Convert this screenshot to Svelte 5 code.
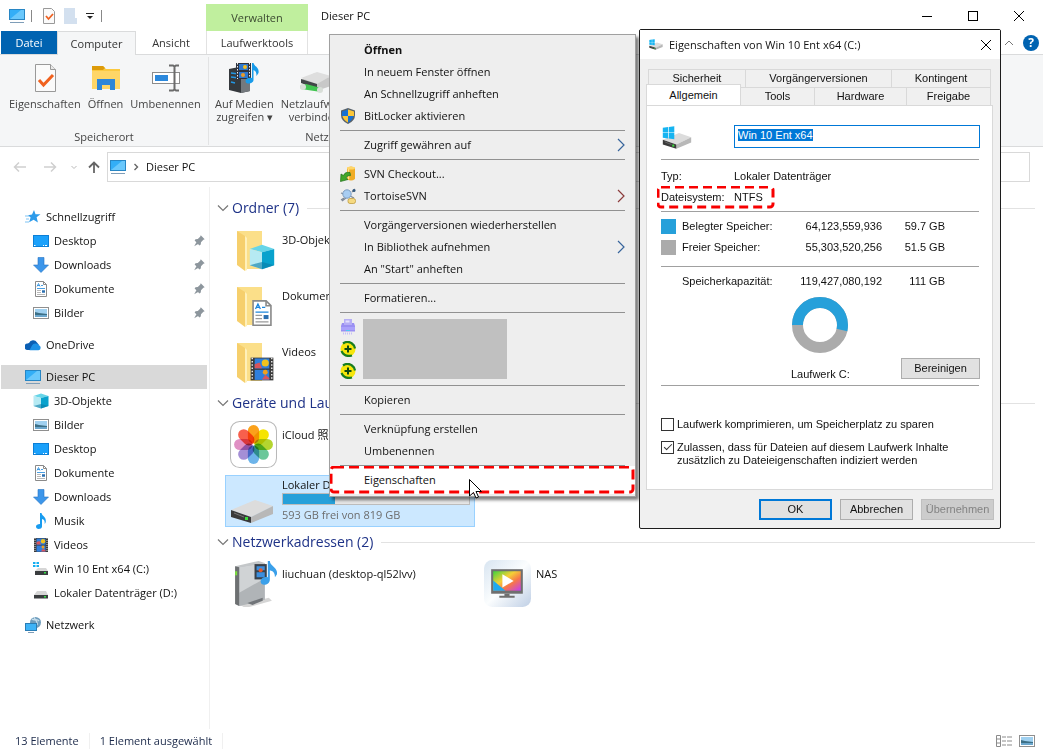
<svelte:options runes={true} />

<script lang="ts">
  import { onMount } from "svelte";

  type NavItem = { label: string; icon: string; pinned?: boolean };
  type NavGroup = { root: NavItem; selected?: boolean; children: NavItem[] };
  type MenuItem = { label: string; icon?: string; strong?: boolean; submenu?: boolean };

  const navGroups: NavGroup[] = [
    {
      root: { label: "Schnellzugriff", icon: "star" },
      children: [
        { label: "Desktop", icon: "desktop", pinned: true },
        { label: "Downloads", icon: "download", pinned: true },
        { label: "Dokumente", icon: "document", pinned: true },
        { label: "Bilder", icon: "picture", pinned: true }
      ]
    },
    { root: { label: "OneDrive", icon: "cloud" }, children: [] },
    {
      root: { label: "Dieser PC", icon: "pc" },
      selected: true,
      children: [
        { label: "3D-Objekte", icon: "cube" },
        { label: "Bilder", icon: "picture" },
        { label: "Desktop", icon: "desktop" },
        { label: "Dokumente", icon: "document" },
        { label: "Downloads", icon: "download" },
        { label: "Musik", icon: "note" },
        { label: "Videos", icon: "film" },
        { label: "Win 10 Ent x64 (C:)", icon: "windrive" },
        { label: "Lokaler Datenträger (D:)", icon: "drive" }
      ]
    },
    { root: { label: "Netzwerk", icon: "network" }, children: [] }
  ];

  const folders: NavItem[] = [
    { label: "3D-Objekte", icon: "cube" },
    { label: "Dokumente", icon: "document" },
    { label: "Videos", icon: "film" }
  ];

  const menuTop: MenuItem[][] = [
    [
      { label: "Öffnen", strong: true },
      { label: "In neuem Fenster öffnen" },
      { label: "An Schnellzugriff anheften" },
      { label: "BitLocker aktivieren", icon: "shield" }
    ],
    [{ label: "Zugriff gewähren auf", submenu: true }],
    [
      { label: "SVN Checkout...", icon: "svn" },
      { label: "TortoiseSVN", icon: "tortoise", submenu: true }
    ],
    [
      { label: "Vorgängerversionen wiederherstellen" },
      { label: "In Bibliothek aufnehmen", submenu: true },
      { label: 'An "Start" anheften' }
    ],
    [{ label: "Formatieren..." }]
  ];

  const menuBottom: MenuItem[][] = [
    [{ label: "Kopieren" }],
    [{ label: "Verknüpfung erstellen" }, { label: "Umbenennen" }]
  ];

  const petals = [
    { angle: 0, color: "#fba11b" },
    { angle: 45, color: "#f5e400" },
    { angle: 90, color: "#b4d52f" },
    { angle: 135, color: "#6cc79a" },
    { angle: 180, color: "#6db4ea" },
    { angle: 225, color: "#a48fd6" },
    { angle: 270, color: "#e090c4" },
    { angle: 315, color: "#f8604c" }
  ];

  const drivePercent = 28;

  let volumeName = $state("Win 10 Ent x64");
  let compress = $state(false);
  let indexed = $state(true);
  let nameInput: HTMLInputElement;

  onMount(() => {
    nameInput.focus();
    nameInput.select();
  });
</script>

{#snippet icon(name: string)}
  <svg class="icon" viewBox="0 0 16 16" aria-hidden="true">
    {#if name === "star"}
      <path d="M9 1l1.500 4.200 5 .1-3.900 3 1.300 5.200-4.300-2.800-4.500 2.500 1.500-4.700-2.600-2.300 4-.6z" fill="#2d9bea" />
      <path d="M0 7h4M1 10h3M0 13h4" stroke="#7fc3f3" />
    {:else if name === "desktop"}
      <rect y="2" width="16" height="12" fill="#0c7fd6" />
      <rect x="1" y="3" width="14" height="10" fill="#1ba1fb" />
      <path d="M1 12.500h1.500M10 12.500h1M12 12.500h2" stroke="#fff" />
    {:else if name === "download"}
      <path d="M5 .5h6V8h4.500L8 15.500.5 8H5z" fill="#3c96ea" stroke="#2574c2" stroke-width=".6" />
    {:else if name === "document"}
      <path d="M2.500.5h8l3 3v12h-11z" fill="#fff" stroke="#8a8a8a" />
      <path d="M10.500.5v3h3" fill="none" stroke="#8a8a8a" />
      <path d="M4 5.500L5.500 2.500 7 5.500M4.500 4.500h2M8 4.500h2M4 7.500h8" fill="none" stroke="#1c86dc" stroke-width=".8" />
      <path d="M4 9.500h4M4 11.500h4M4 13.500h8" stroke="#9a9a9a" stroke-width=".7" />
      <path d="M9 10.500h3" stroke="#2b6fb0" stroke-width="2.500" />
    {:else if name === "picture"}
      <rect x=".5" y="2.500" width="15" height="11" fill="#fff" stroke="#8f8f8f" />
      <rect x="2" y="4" width="12" height="8" fill="#9fd0f0" />
      <path d="M2 7l4 1 8 1v3H2z" fill="#3c6f86" />
      <path d="M2 10h12v2H2z" fill="#6ba6cc" />
    {:else if name === "cloud"}
      <path d="M4 6a4.500 4.500 0 0 1 8-.5L14 8l-8 5H3a3.200 3.200 0 0 1-.5-6.500z" fill="#0a5fb4" />
      <path d="M4.500 13.200L7 8.500a4 4 0 0 1 6.500-.5 2.700 2.700 0 0 1 0 5.300z" fill="#1c91e6" />
    {:else if name === "pc"}
      <rect x=".5" y="1.500" width="15" height="10" fill="#33aef7" stroke="#2886c4" />
      <path d="M1 11L12 2h3v9z" fill="#6ac8fc" />
      <path d="M1 14.500h14" stroke="#7e9db8" />
    {:else if name === "cube"}
      <path d="M8 .5L15.500 3 8 5 .5 3z" fill="#66d5e8" />
      <path d="M.5 3L8 5v10.500L.5 13z" fill="#b6eaf3" />
      <path d="M15.500 3L8 5v10.500l7.500-2.500z" fill="#08a2cd" />
      <path d="M8 11l7.500 2L8 15.500.5 13z" fill="#087ba6" opacity=".6" />
    {:else if name === "note"}
      <path d="M7 0h1.500c.4 3 4.800 3.500 4.300 8.500-.2 1.500-.8 2-1.200 2.500.6-3-.6-4.500-2.600-5v7.500c-.2 1.800-1.600 2.500-3.300 2.500S3 15 3 13.500 4.500 11 7 11z" fill="#189cf0" />
    {:else if name === "film"}
      <rect x="1" y="1" width="14" height="14" fill="#3a3a3a" />
      <path d="M2 1v14M14 1v14" stroke="#e6e6e6" stroke-width=".9" stroke-dasharray="1 1" />
      <rect x="3.500" y="1.500" width="9" height="6.200" fill="#2f7fdd" />
      <rect x="3.500" y="8.500" width="9" height="6.200" fill="#2f7fdd" />
      <path d="M3.500 5l3-1 1.500 3.500H3.500zM8 14.500l2-3 2.500 2v1z" fill="#d8545c" />
      <circle cx="10" cy="4.300" r="2.200" fill="#f2c21c" />
      <circle cx="10" cy="10" r="1.500" fill="#f2a01c" />
    {:else if name === "windrive"}
      <path d="M0 1h2.500v2H0zM3.500 1H6v2H3.500zM0 4h2.500v2H0zM3.500 4H6v2H3.500z" fill="#15aef0" />
      <path d="M5 7h8l2 3H2z" fill="#d6d6d6" />
      <rect x="2" y="10" width="13" height="4" fill="#3a3d3f" />
      <rect x="11" y="11" width="2" height="1.500" fill="#35dd47" />
    {:else if name === "drive"}
      <path d="M4 6h9l2 4H1z" fill="#d6d6d6" />
      <rect x="1" y="10" width="14" height="3.500" fill="#3a3d3f" />
      <rect x="11" y="11" width="2" height="1.500" fill="#35dd47" />
    {:else if name === "network"}
      <circle cx="10.500" cy="5.500" r="5.500" fill="#6f9dbd" />
      <path d="M7 2c2 2 5-1 7 2M9 0c1 4 4 3 3 8" fill="none" stroke="#c4dcea" stroke-width="1.400" />
      <rect x=".5" y="6.500" width="11" height="7" fill="#3eb3f7" stroke="#2a7db5" />
      <path d="M3 15.500h6" stroke="#7e9db8" />
    {:else if name === "pin"}
      <path d="M10 1.500l4.500 4.500-1.500.7-2.700 2.700-.3 2.600-1.500 1L3 7.500l1-1.500 2.600-.3 2.700-2.700zM5 9.500l2 2L2.500 14z" fill="#8d969d" />
    {:else if name === "shield"}
      <path d="M8 0l7 2.500v4.500q0 6-7 9Q1 13 1 7V2.500z" fill="#58626b" />
      <path d="M8 1.500V8H2V3.500zM8 8h5.500q-1 4-5.500 6.500z" fill="#1670d2" />
      <path d="M8 1.500V8h6V3.500zM8 8H2.500q1 4 5.500 6.500z" fill="#fbc638" />
    {:else if name === "svn"}
      <path d="M7 2q4-3 8 0v11q-4 3-8 0z" fill="#f0ac26" />
      <path d="M8.500 2v11" stroke="#ffe391" stroke-width="1.500" />
      <ellipse cx="11" cy="2" rx="4" ry="1.500" fill="#ffd669" />
      <path d="M10 6.500Q5 5.500 3.500 9.500L1 8l-.5 7.500L8 13.500l-2-1.500q1-3 4.500-2.500z" fill="#41a62a" stroke="#1f701a" stroke-width=".7" />
    {:else if name === "tortoise"}
      <path d="M1 5l3 1M1 12l3-2M12 4l3-3M10 8l4 2M2 13l4-3" stroke="#7e8894" stroke-width="1.200" />
      <circle cx="7" cy="6" r="4.200" fill="#a8cdf2" stroke="#7d9cc0" />
      <circle cx="14" cy="2.500" r="1.500" fill="#31577c" />
      <rect x="8" y="10.500" width="7.500" height="5" rx="2" fill="#f5d980" stroke="#b99432" stroke-width=".7" />
    {:else if name === "printer"}
      <rect x="4" y="0" width="8" height="6" fill="#b6aef5" />
      <rect x="5.500" y="1.500" width="4" height="2" fill="#e4e0ff" />
      <path d="M2 4h2v2h8V4h2l1 3v5.500H1V7z" fill="#9a8ff2" />
      <path d="M1 8h14v3H1z" fill="#aaa1fb" />
      <path d="M6 11.500h4" stroke="#4cc6f5" />
      <path d="M3 14.500h10" stroke="#c6bff8" stroke-width="2" stroke-dasharray="1 1" />
    {:else if name === "plus"}
      <circle cx="8" cy="8" r="7.500" fill="#f6e60c" />
      <path d="M3 2.500Q9-1.500 14 4.500l1 3M1.500 10q3 6.500 10.500 4.500" fill="none" stroke="#187d20" stroke-width="2.200" />
      <path d="M8 4.500v7M4.500 8h7" stroke="#0d4a10" stroke-width="2" />
    {/if}
  </svg>
{/snippet}

{#snippet bigDrive(windows: boolean)}
  <svg class="big-drive" viewBox="0 0 44 34" aria-hidden="true">
    <path d="M1 19L25 9l18 6-22 11z" fill="#dcdcdc" />
    <path d="M21 26l22-11v8L21 32z" fill="#b8b8b8" />
    <path d="M1 19l20 7v6L1 26z" fill="#3a3a3a" />
    <path d="M4 22l10 4" stroke="#777" />
    <rect x="15" y="26" width="3" height="3" fill="#3ddd3c" />
    {#if windows}
      <path d="M1 1l8-1v8H1zM10 0l8-1v9h-8zM1 9h8v8l-8-1zM10 9h8v9l-8-1z" fill="#16b4f1" />
    {/if}
  </svg>
{/snippet}

{#snippet menuRow(item: MenuItem)}
  <button class="menu-item" class:strong={item.strong} role="menuitem">
    <span class="menu-icon">
      {#if item.icon}{@render icon(item.icon)}{/if}
    </span>
    <span class="menu-label">{item.label}</span>
    {#if item.submenu}
      <svg class="submenu-arrow" viewBox="0 0 8 14" aria-hidden="true">
        <path d="M1 1l6 6-6 6" fill="none" stroke={item.icon ? "#8c3c3c" : "#38659c"} stroke-width="1.200" />
      </svg>
    {/if}
  </button>
{/snippet}

{#snippet sectionHead(title: string)}
  <h2 class="section-head">
    <svg viewBox="0 0 12 8" aria-hidden="true"><path d="M1 1.500l5 5 5-5" fill="none" stroke="#777" stroke-width="1.200" /></svg>
    <span>{title}</span>
  </h2>
{/snippet}

<div class="explorer">
  <header class="titlebar">
    <div class="quick-access">
      {@render icon("pc")}
      <i class="divider"></i>
      <svg class="icon check-doc" viewBox="0 0 16 16" aria-hidden="true">
        <path d="M2.500.5h8l3 3v12h-11z" fill="#fafafa" stroke="#999" />
        <path d="M5 8l2.500 3L12 6" fill="none" stroke="#ee6020" stroke-width="1.800" />
      </svg>
      <svg class="icon" viewBox="0 0 16 16" aria-hidden="true">
        <path d="M1 0h11v10h2v6H1z" fill="#d3e0ef" />
      </svg>
      <svg class="caret" viewBox="0 0 10 8" aria-hidden="true"><path d="M1 1.500h8" stroke="#222" /><path d="M2 4h6L5 7z" fill="#222" /></svg>
      <i class="divider"></i>
    </div>
    <span class="context-tab">Verwalten</span>
    <span class="window-title">Dieser PC</span>
    <div class="window-controls">
      <button aria-label="Minimieren"><svg viewBox="0 0 10 10"><path d="M0 5.500h10" stroke="#000" /></svg></button>
      <button aria-label="Maximieren"><svg viewBox="0 0 10 10"><rect x=".5" y=".5" width="9" height="9" fill="none" stroke="#000" /></svg></button>
      <button aria-label="Schließen"><svg viewBox="0 0 10 10"><path d="M0 0l10 10M10 0L0 10" stroke="#000" /></svg></button>
    </div>
  </header>

  <nav class="tabs">
    <button class="tab file">Datei</button>
    <button class="tab current">Computer</button>
    <button class="tab">Ansicht</button>
    <button class="tab tools">Laufwerktools</button>
    <div class="tab-end">
      <svg class="collapse" viewBox="0 0 10 6" aria-hidden="true"><path d="M1 5l4-4 4 4" fill="none" stroke="#777" /></svg>
      <button class="help" aria-label="Hilfe">?</button>
    </div>
  </nav>

  <section class="ribbon">
    <div class="ribbon-group">
      <div class="ribbon-buttons">
        <button>
          <svg viewBox="0 0 32 32" aria-hidden="true">
            <path d="M6.500 2.500h15l5 5v22h-20z" fill="#fafafa" stroke="#999" />
            <path d="M21.500 2.500v5h5" fill="#e8e8e8" stroke="#999" />
            <path d="M10 18l4.500 5L24 13" fill="none" stroke="#f0611e" stroke-width="3" />
          </svg>
          <span>Eigenschaften</span>
        </button>
        <button>
          <svg viewBox="0 0 32 32" aria-hidden="true">
            <path d="M2 4h11l3 3h14v20H2z" fill="#fbc93f" />
            <path d="M2 4h11l2 2-2 2H2z" fill="#dd9b0a" />
            <path d="M2 9h28v18H2z" fill="#fed667" />
            <path d="M7 28V17h18v11h-5v-5h-8v5z" fill="#2d86d8" />
          </svg>
          <span>Öffnen</span>
        </button>
        <button>
          <svg viewBox="0 0 32 32" aria-hidden="true">
            <rect x="2.500" y="10.500" width="27" height="11" fill="#fff" stroke="#8c8c8c" />
            <rect x="5" y="13" width="13" height="6" fill="#2b88dc" />
            <path d="M19 3.500h4l1.500 1 1.500-1h3M24.500 4v24M19 28.500h4l1.500-1 1.500 1h3" fill="none" stroke="#6b6b6b" stroke-width="2" />
          </svg>
          <span>Umbenennen</span>
        </button>
      </div>
      <span class="ribbon-caption">Speicherort</span>
    </div>
    <div class="ribbon-group wide">
      <div class="ribbon-buttons">
        <button>
          <svg viewBox="0 0 32 32" aria-hidden="true">
            <path d="M1 7l10-2 11 2v22l-9 2-12-3z" fill="#35393d" />
            <path d="M13 9l9-2v22l-9 2z" fill="#74797e" />
            <path d="M3 11l8 1M3 15l8 1M3 20l4 1" stroke="#2397e4" stroke-width="1.500" />
            <rect x="8" y="1" width="15" height="16" fill="#2d3340" />
            <path d="M9.500 1v16M21.500 1v16" stroke="#eee" stroke-dasharray="1.500 1.500" />
            <path d="M11 2h9v6h-9zM11 10h9v6h-9z" fill="#2d78cf" />
            <circle cx="17" cy="5" r="2" fill="#f4bd20" />
            <circle cx="15" cy="13" r="2" fill="#eb9a26" />
            <path d="M24 1h1.500c1 4 6 4 5 10l-2 3c0-4-1-5-3-6v10c0 4-8 5-8 1 0-3 4-4 6.500-3z" fill="#199bea" />
          </svg>
          <span>Auf Medien<br />zugreifen <b class="drop">▾</b></span>
        </button>
        <button>
          <svg viewBox="0 0 32 32" aria-hidden="true">
            <path d="M2 18l14-7 16 5v8l-12 4z" fill="#c8c8c8" />
            <path d="M2 16l16-6 14 4-14 8z" fill="#dedede" />
            <path d="M2 17l16 5v5L2 21z" fill="#424648" />
            <path d="M1 24l6-2 15 4v4L2 27z" fill="#42c552" />
            <circle cx="4" cy="25" r="3" fill="#d8ded8" />
            <circle cx="21" cy="28" r="3" fill="#d8ded8" />
          </svg>
          <span>Netzlaufwerk<br />verbinden</span>
        </button>
      </div>
      <span class="ribbon-caption">Netzwerk</span>
    </div>
  </section>

  <div class="address-row">
    <div class="nav-arrows">
      <button aria-label="Zurück"><svg viewBox="0 0 14 12"><path d="M13 6H1.500M6 1.500L1.500 6 6 10.500" fill="none" stroke="#cfcfcf" stroke-width="1.500" /></svg></button>
      <button aria-label="Vorwärts"><svg viewBox="0 0 14 12"><path d="M1 6h11.500M8 1.500L12.500 6 8 10.500" fill="none" stroke="#cfcfcf" stroke-width="1.500" /></svg></button>
      <button class="small" aria-label="Verlauf"><svg viewBox="0 0 8 12"><path d="M1.500 5L4 7.500 6.500 5" fill="none" stroke="#bbb" /></svg></button>
      <button aria-label="Nach oben"><svg viewBox="0 0 14 12"><path d="M7 12V1.500M2 6.500l5-5 5 5" fill="none" stroke="#666" stroke-width="1.800" /></svg></button>
    </div>
    <div class="address-box">
      {@render icon("pc")}
      <svg class="crumb" viewBox="0 0 6 8" aria-hidden="true"><path d="M1.500 1l3 3-3 3" fill="none" stroke="#666" stroke-width="1.400" /></svg>
      <span>Dieser PC</span>
    </div>
    <input class="search-box" type="search" aria-label="Suchen" />
  </div>

  <div class="body">
    <aside class="sidebar">
      {#each navGroups as group (group.root.label)}
        <ul class="nav-group">
          <li class="nav-row root" class:selected={group.selected}>
            {@render icon(group.root.icon)}
            <span>{group.root.label}</span>
          </li>
          {#each group.children as item (item.label)}
            <li class="nav-row">
              {@render icon(item.icon)}
              <span>{item.label}</span>
              {#if item.pinned}
                <span class="pin">{@render icon("pin")}</span>
              {/if}
            </li>
          {/each}
        </ul>
      {/each}
    </aside>

    <main class="content">
      {@render sectionHead("Ordner (7)")}
      <div class="tiles single">
        {#each folders as folder (folder.label)}
          <div class="tile">
            <div class="tile-icon folder">
              <svg class="folder-shape" viewBox="0 0 40 44" aria-hidden="true">
                <path d="M2 1h25v38H10z" fill="#fbdf89" />
                <path d="M2 1l8 5v35l-8-6z" fill="#f6cf6c" />
                <path d="M10 6v35l2-1V8z" fill="#fff0b9" />
              </svg>
              <span class="overlay">{@render icon(folder.icon)}</span>
            </div>
            <span class="tile-name">{folder.label}</span>
          </div>
        {/each}
      </div>

      {@render sectionHead("Geräte und Laufw")}
      <div class="tiles single">
        <div class="tile">
          <div class="tile-icon">
            <svg class="full" viewBox="0 0 46 46" aria-hidden="true">
              <rect x=".5" y=".5" width="45" height="45" rx="9" fill="#fff" stroke="#b9b9b9" />
              {#each petals as petal (petal.angle)}
                <rect class="petal" x="17.500" y="4" width="11" height="18" rx="5.500" fill={petal.color} transform="rotate({petal.angle} 23 23)" />
              {/each}
            </svg>
          </div>
          <span class="tile-name">iCloud 照片</span>
        </div>
        <div class="tile selected">
          <div class="tile-icon low">{@render bigDrive(false)}</div>
          <div class="tile-info">
            <span class="tile-name">Lokaler Daten</span>
            <div class="meter"><div style="width: {drivePercent}%"></div></div>
            <span class="tile-note">593 GB frei von 819 GB</span>
          </div>
        </div>
      </div>

      {@render sectionHead("Netzwerkadressen (2)")}
      <div class="tiles">
        <div class="tile">
          <div class="tile-icon">
            <svg class="full" viewBox="0 0 46 46" aria-hidden="true">
              <path d="M10 44l28-7 3 3-26 7z" fill="#d5d5d5" />
              <path d="M5 6L28 1l6 2v36L9 45l-4-2z" fill="#c4c7c9" />
              <path d="M9 7l25-4v36L9 45z" fill="#b0b4b7" />
              <path d="M9 7l25-4v15L9 32z" fill="#d0d3d5" />
              <path d="M5 6l4 1v38l-4-2z" fill="#6d7072" />
              <path d="M6 11v4" stroke="#7be03d" stroke-width="2" />
              <path d="M17 42l15-5v3l-10 4z" fill="#717579" />
              <rect x="24" y="4" width="12" height="15" fill="#39404a" />
              <path d="M26 6h8v4h-8zM26 12h8v5h-8z" fill="#3c8ede" />
              <circle cx="30" cy="10" r="2" fill="#e65a2a" />
              <path d="M37 1h2c0 5 8 6 7 13l-2 3c0-5-2-6-5-7v9c0 6-9 7-9 2 0-4 5-5 7-4z" fill="#3ba0ea" />
            </svg>
          </div>
          <span class="tile-name">liuchuan (desktop-ql52lvv)</span>
        </div>
        <div class="tile">
          <div class="tile-icon">
            <svg class="full" viewBox="0 0 46 46" aria-hidden="true">
              <defs>
                <linearGradient id="nas-bg" x1="0" y1="0" x2="1" y2="1">
                  <stop offset="0" stop-color="#d8e5f1" /><stop offset=".5" stop-color="#fbfdfe" /><stop offset="1" stop-color="#bfcfe5" />
                </linearGradient>
                <linearGradient id="nas-screen" x1="0" y1="0" x2="1" y2="1">
                  <stop offset="0" stop-color="#3ed33e" /><stop offset=".4" stop-color="#f6cf36" /><stop offset=".65" stop-color="#f7764a" /><stop offset="1" stop-color="#c43df5" />
                </linearGradient>
              </defs>
              <rect width="46" height="46" rx="8" fill="url(#nas-bg)" />
              <rect x="7" y="9" width="31" height="24" fill="#6f6f6f" />
              <rect x="9" y="11" width="27" height="19" fill="url(#nas-screen)" />
              <path d="M9 20l12 10H9z" fill="#1fa9ef" />
              <path d="M18 14l11 6.500L18 27z" fill="#fff" />
              <path d="M20 33h5v2h5v2H15v-2h5z" fill="#6f6f6f" />
            </svg>
          </div>
          <span class="tile-name">NAS</span>
        </div>
      </div>
    </main>
  </div>

  <footer class="statusbar">
    <span>13 Elemente</span>
    <i></i>
    <span>1 Element ausgewählt</span>
    <i></i>
    <div class="view-modes">
      <svg class="icon" viewBox="0 0 16 16" aria-hidden="true">
        <path d="M.5 2.500h4v11h-4zM.5 6h4M.5 10h4M6 4h4M11 4h5M6 8h4M11 8h5M6 12h4M11 12h5" fill="none" stroke="#8b8b8b" />
      </svg>
      {@render icon("picture")}
    </div>
  </footer>
</div>

<div class="context-menu" role="menu">
  {#each menuTop as group, index (index)}
    {#each group as item (item.label)}
      {@render menuRow(item)}
    {/each}
    <hr />
  {/each}
  <div class="menu-extras">
    <div class="extra-icons">
      <span>{@render icon("printer")}</span>
      <span>{@render icon("plus")}</span>
      <span>{@render icon("plus")}</span>
    </div>
    <div class="extra-block"></div>
  </div>
  <hr />
  {#each menuBottom as group, index (index)}
    {#each group as item (item.label)}
      {@render menuRow(item)}
    {/each}
    <hr />
  {/each}
  <div class="menu-active">
    {@render menuRow({ label: "Eigenschaften" })}
    <svg class="marker" aria-hidden="true"><rect x="1" y="1" rx="3" /></svg>
    <svg class="pointer" viewBox="0 0 13 20" aria-hidden="true">
      <path d="M.5.5v16.500l4-3.500 2.500 5.500 2.500-1-2.500-5.500h5.500z" fill="#fff" stroke="#000" />
    </svg>
  </div>
</div>

<div class="dialog" role="dialog" aria-labelledby="dialog-title">
  <header class="dialog-head">
    <span class="dialog-icon">{@render bigDrive(true)}</span>
    <h1 id="dialog-title">Eigenschaften von Win 10 Ent x64 (C:)</h1>
    <button aria-label="Dialog schließen"><svg viewBox="0 0 10 10"><path d="M0 0l10 10M10 0L0 10" stroke="#000" /></svg></button>
  </header>

  <div class="dialog-body">
    <div class="dialog-tabs back">
      <button style="flex-grow: 97">Sicherheit</button>
      <button style="flex-grow: 147">Vorgängerversionen</button>
      <button style="flex-grow: 99">Kontingent</button>
    </div>
    <div class="dialog-tabs front">
      <button class="active" style="flex-grow: 94">Allgemein</button>
      <button style="flex-grow: 74">Tools</button>
      <button style="flex-grow: 92">Hardware</button>
      <button style="flex-grow: 84">Freigabe</button>
    </div>

    <div class="panel">
      <div class="name-row">
        <span class="name-icon">{@render bigDrive(true)}</span>
        <input bind:this={nameInput} bind:value={volumeName} type="text" aria-label="Name" />
      </div>
      <hr />
      <dl>
        <div><dt>Typ:</dt><dd>Lokaler Datenträger</dd></div>
        <div class="marked">
          <dt>Dateisystem:</dt><dd>NTFS</dd>
          <svg class="marker" aria-hidden="true"><rect x="1" y="1" rx="3" /></svg>
        </div>
      </dl>
      <hr />
      <table>
        <tbody>
          <tr><td class="swatch"><i class="used"></i></td><th scope="row">Belegter Speicher:</th><td class="bytes">64,123,559,936</td><td class="size">59.7 GB</td></tr>
          <tr><td class="swatch"><i></i></td><th scope="row">Freier Speicher:</th><td class="bytes">55,303,520,256</td><td class="size">51.5 GB</td></tr>
        </tbody>
      </table>
      <hr />
      <table class="capacity">
        <tbody>
          <tr><td class="swatch"></td><th scope="row">Speicherkapazität:</th><td class="bytes">119,427,080,192</td><td class="size">111 GB</td></tr>
        </tbody>
      </table>
      <div class="usage">
        <div class="usage-chart">
          <svg viewBox="0 0 56 56" aria-hidden="true">
            <circle cx="28" cy="28" r="22.500" fill="none" stroke="#ababab" stroke-width="11" />
            <circle cx="28" cy="28" r="22.500" fill="none" stroke="#26a0da" stroke-width="11" pathLength="100" stroke-dasharray="53.700 46.300" transform="rotate(180 28 28)" />
          </svg>
          <span>Laufwerk C:</span>
        </div>
        <button class="push">Bereinigen</button>
      </div>
      <hr />
      <div class="options">
        <label><input type="checkbox" bind:checked={compress} /><span>Laufwerk komprimieren, um Speicherplatz zu sparen</span></label>
        <label><input type="checkbox" bind:checked={indexed} /><span>Zulassen, dass für Dateien auf diesem Laufwerk Inhalte<br />zusätzlich zu Dateieigenschaften indiziert werden</span></label>
      </div>
    </div>

    <div class="dialog-actions">
      <button class="push default">OK</button>
      <button class="push">Abbrechen</button>
      <button class="push" disabled>Übernehmen</button>
    </div>
  </div>
</div>

<style>
  :global(body) {
    margin: 0;
    background: #fff;
    color: #111;
    font-family: "Open Sans", "Noto Sans CJK SC", sans-serif;
    font-size: 11px;
    line-height: 16px;
  }

  button,
  input {
    box-sizing: border-box;
    margin: 0;
    padding: 0;
    border: 0;
    border-radius: 0;
    background: none;
    color: inherit;
    font: inherit;
    outline: none;
  }

  svg {
    display: block;
    flex: none;
  }

  ul,
  dl,
  dd {
    margin: 0;
    padding: 0;
    list-style: none;
  }

  .icon {
    width: 16px;
    height: 16px;
  }

  .explorer {
    display: flex;
    flex-direction: column;
    min-height: 100vh;
    overflow: hidden;
  }

  /* title bar */
  .titlebar {
    display: flex;
    height: 31px;
    align-items: center;
  }

  .quick-access {
    display: flex;
    flex: 0 0 206px;
    align-items: center;
    gap: 6px;
    padding-left: 9px;
    box-sizing: border-box;
  }

  .divider {
    width: 1px;
    height: 12px;
    background: #888;
  }

  .check-doc {
    margin-left: 3px;
  }

  .caret {
    width: 10px;
    height: 8px;
  }

  .context-tab {
    align-self: flex-end;
    width: 102px;
    height: 27px;
    background: #c0ef9e;
    color: #3b4a31;
    line-height: 28px;
    text-align: center;
  }

  .window-title {
    margin-left: 13px;
  }

  .window-controls {
    display: flex;
    margin: 0 1px 0 auto;
  }

  .window-controls button {
    display: grid;
    width: 46px;
    height: 30px;
    place-items: center;
  }

  .window-controls svg {
    width: 10px;
    height: 10px;
  }

  /* ribbon */
  .tabs {
    display: flex;
    height: 24px;
    box-sizing: border-box;
    border-bottom: 1px solid #dadbdc;
    padding-left: 1px;
  }

  .tab {
    width: 70px;
    height: 23px;
    color: #333;
    text-align: center;
  }

  .tab.file {
    width: 56px;
    background: #0063b1;
    color: #fff;
  }

  .tab.current {
    width: 79px;
    height: 24px;
    border: 1px solid #dadbdc;
    border-bottom: 0;
    background: #f5f6f7;
  }

  .tab.tools {
    width: 102px;
    border: solid #e2e2e2;
    border-width: 0 1px;
  }

  .tab-end {
    display: flex;
    align-items: center;
    gap: 9px;
    margin-left: auto;
    padding-right: 4px;
  }

  .collapse {
    width: 10px;
    height: 6px;
  }

  .help {
    width: 16px;
    height: 16px;
    border-radius: 50%;
    background: #0063b1;
    color: #fff;
    font-size: 12px;
    font-weight: 700;
    line-height: 16px;
  }

  .ribbon {
    display: flex;
    height: 92px;
    box-sizing: border-box;
    border-bottom: 1px solid #dadbdc;
    background: #f5f6f7;
    color: #444;
    overflow: hidden;
  }

  .ribbon-group {
    display: flex;
    flex-direction: column;
    width: 209px;
    box-sizing: border-box;
    margin: 2px 0 1px;
    border-right: 1px solid #e2e3e4;
  }

  .ribbon-group.wide {
    width: 242px;
  }

  .ribbon-buttons {
    display: flex;
    flex: 1;
    gap: 7px;
    padding: 5px 6px 0 9px;
  }

  .wide .ribbon-buttons {
    padding-left: 6px;
  }

  .ribbon-buttons button {
    display: flex;
    flex-direction: column;
    align-items: center;
    gap: 3px;
    line-height: 13px;
    white-space: nowrap;
  }

  .ribbon-buttons svg {
    width: 32px;
    height: 32px;
  }

  .drop {
    font-family: "DejaVu Sans", sans-serif;
    font-weight: 400;
  }

  .ribbon-caption {
    text-align: center;
  }

  /* address row */
  .address-row {
    display: flex;
    align-items: center;
    gap: 12px;
    height: 40px;
    padding-right: 13px;
  }

  .nav-arrows {
    display: flex;
    align-items: center;
    gap: 16px;
    width: 95px;
    flex: none;
    padding-left: 13px;
    box-sizing: border-box;
  }

  .nav-arrows svg {
    width: 14px;
    height: 12px;
  }

  .nav-arrows .small,
  .nav-arrows .small svg {
    width: 8px;
  }

  .nav-arrows button:last-child {
    margin-left: -7px;
  }

  .nav-arrows .small {
    margin-left: -3px;
  }

  .address-box,
  .search-box {
    height: 30px;
    box-sizing: border-box;
    border: 1px solid #d9d9d9;
  }

  .address-box {
    display: flex;
    flex: 1;
    align-items: center;
    gap: 7px;
    padding-left: 2px;
  }

  .crumb {
    width: 6px;
    height: 8px;
  }

  .search-box {
    width: 220px;
  }

  /* main area */
  .body {
    display: flex;
    flex: 1;
  }

  .sidebar {
    width: 210px;
    flex: none;
    box-sizing: border-box;
    padding: 18px 2px 0 1px;
    border-right: 1px solid #f0f0f0;
  }

  .nav-group {
    margin-bottom: 8px;
  }

  .nav-row {
    display: flex;
    align-items: center;
    gap: 5px;
    height: 24px;
    padding-left: 32px;
  }

  .nav-row.root {
    padding-left: 24px;
  }

  .nav-row.selected {
    background: #d9d9d9;
  }

  .pin {
    margin-left: auto;
    margin-right: 1px;
  }

  .pin .icon {
    width: 14px;
    height: 14px;
  }

  .content {
    flex: 1;
    min-width: 0;
    padding: 10px 8px 0 7px;
  }

  .section-head {
    display: flex;
    align-items: center;
    gap: 3px;
    height: 22px;
    margin: 0 0 5px;
    color: #1e3287;
    font-size: 14px;
    font-weight: 400;
    white-space: nowrap;
  }

  .section-head svg {
    width: 12px;
    height: 8px;
  }

  .section-head::after {
    flex: 1;
    height: 1px;
    margin-left: 5px;
    background: #e2e2e2;
    content: "";
  }

  .tiles {
    display: grid;
    grid-template-columns: repeat(auto-fill, 250px);
    gap: 4px;
    margin: 0 0 4px 8px;
  }

  .tiles.single {
    grid-template-columns: 250px;
  }

  .tile {
    display: flex;
    gap: 5px;
    height: 52px;
    box-sizing: border-box;
    padding: 1px 4px;
    border: 1px solid transparent;
  }

  .tile.selected {
    border-color: #99d1ff;
    background: #cce8ff;
  }

  .tile-icon {
    position: relative;
    width: 47px;
    flex: none;
  }

  .tile-icon .full {
    width: 47px;
    height: 47px;
  }

  .petal {
    mix-blend-mode: multiply;
  }

  .folder-shape {
    width: 40px;
    height: 44px;
    margin: 4px 0 0 5px;
  }

  .overlay {
    position: absolute;
    right: 2px;
    bottom: 3px;
  }

  .overlay .icon {
    width: 26px;
    height: 28px;
  }

  .tile-icon.low {
    display: flex;
    align-items: flex-end;
  }

  .big-drive {
    width: 44px;
    height: 34px;
    overflow: visible;
  }

  .tile-name {
    height: 16px;
    padding-top: 6px;
  }

  .tile-info {
    display: flex;
    flex: 1;
    flex-direction: column;
  }

  .tile-info .tile-name {
    height: 15px;
    padding-top: 0;
    line-height: 15px;
  }

  .meter {
    height: 12px;
    box-sizing: border-box;
    margin: 1px 0 2px;
    border: 1px solid #bcbcbc;
    background: #e6e6e6;
  }

  .meter div {
    height: 100%;
    background: #26a0da;
  }

  .tile-note {
    color: #6d6d6d;
  }

  .statusbar {
    display: flex;
    align-items: center;
    gap: 10px;
    height: 24px;
    padding: 0 8px 0 15px;
    color: #1c2a4a;
  }

  .statusbar i {
    width: 1px;
    height: 16px;
    background: #f0f0f0;
  }

  .view-modes {
    display: flex;
    gap: 7px;
    margin-left: auto;
  }

  /* context menu */
  .context-menu {
    position: absolute;
    top: 34px;
    left: 329px;
    width: 307px;
    box-sizing: border-box;
    padding: 4px 0 2px;
    border: 1px solid #a0a0a0;
    background: #eee;
    box-shadow: 3px 3px 3px rgba(0, 0, 0, 0.5);
  }

  .context-menu hr {
    height: 1px;
    margin: 3px 10px;
    border: 0;
    background: #919191;
  }

  .menu-item {
    display: flex;
    width: 100%;
    height: 22px;
    align-items: center;
    padding: 0 10px;
    text-align: left;
  }

  .menu-item.strong {
    font-weight: 700;
  }

  .menu-icon {
    width: 24px;
    flex: none;
  }

  .submenu-arrow {
    width: 8px;
    height: 14px;
    margin-left: auto;
  }

  .menu-extras {
    display: flex;
    align-items: center;
    gap: 7px;
    padding-left: 10px;
  }

  .extra-icons span {
    display: flex;
    height: 22px;
    align-items: center;
  }

  .extra-block {
    width: 144px;
    height: 60px;
    background: silver;
  }

  .menu-active {
    position: relative;
    margin-top: -3px;
    padding: 3px 0;
    background: #fff;
  }

  .marker {
    position: absolute;
    inset: 0;
    width: 100%;
    height: 100%;
  }

  .marker rect {
    width: calc(100% - 3px);
    height: calc(100% - 3px);
    fill: none;
    stroke: #f80000;
    stroke-width: 3px;
    stroke-dasharray: 10 5;
  }

  .pointer {
    position: absolute;
    top: 13px;
    left: 139px;
    width: 13px;
    height: 20px;
  }

  /* properties dialog */
  .dialog {
    position: absolute;
    top: 29px;
    left: 639px;
    width: 362px;
    box-sizing: border-box;
    border: 1px solid #1c1c1c;
    border-radius: 2px;
    background: #f0f0f0;
    font-family: "Liberation Sans", Arial, sans-serif;
    line-height: 13px;
  }

  .dialog-head {
    display: flex;
    align-items: center;
    height: 29px;
    padding: 0 9px;
    background: #fff;
    font-family: "Open Sans", sans-serif;
  }

  .dialog-icon .big-drive {
    width: 14px;
    height: 14px;
  }

  .dialog-head h1 {
    margin: 0 auto 0 6px;
    font-size: 11px;
    font-weight: 400;
  }

  .dialog-head svg {
    width: 10px;
    height: 10px;
  }

  .dialog-body {
    padding: 10px 6px 8px;
  }

  .dialog-tabs {
    display: flex;
    padding: 0 3px 0 2px;
  }

  .dialog-tabs button {
    flex-basis: 0;
    height: 18px;
    border: 1px solid #d9d9d9;
    border-width: 1px 1px 0 0;
  }

  .dialog-tabs.back button:first-child {
    border-left-width: 1px;
  }

  .dialog-tabs.front {
    padding-left: 0;
  }

  .dialog-tabs .active {
    position: relative;
    height: 21px;
    margin: -3px 0 -1px;
    border-left-width: 1px;
    background: #fff;
  }

  .panel {
    margin-right: 1px;
    padding: 19px 12px 0 14px;
    border: 1px solid #d9d9d9;
    background: #fff;
  }

  .panel hr {
    height: 1px;
    margin: 0 1px 0 0;
    border: 0;
    background: #a0a0a0;
  }

  .name-row {
    display: flex;
    justify-content: space-between;
    margin-bottom: 9px;
  }

  .name-icon {
    padding: 2px 0 0 1px;
  }

  .name-icon .big-drive {
    width: 30px;
    height: 23px;
  }

  .name-row input {
    width: 246px;
    height: 23px;
    border: 1px solid #0078d7;
    padding: 0 3px 4px;
  }

  .name-row input::selection {
    background: #0078d7;
    color: #fff;
  }

  dl {
    padding: 6px 0 3px;
  }

  dl div {
    display: flex;
    height: 21px;
    align-items: center;
  }

  dt {
    width: 73px;
  }

  .marked {
    position: relative;
  }

  .marked .marker {
    inset: -1px auto auto -4px;
    width: 118px;
    height: 23px;
  }

  .marked .marker rect {
    stroke-dasharray: 9 5;
  }

  table {
    width: 284px;
    margin: 4px 0 8px;
    border-collapse: collapse;
  }

  table.capacity {
    margin: 4px 0 5px;
  }

  th,
  td {
    height: 21px;
    padding: 0;
    font-weight: 400;
    text-align: left;
  }

  .swatch {
    width: 21px;
  }

  .swatch i {
    display: block;
    width: 15px;
    height: 15px;
    background: #ababab;
  }

  .swatch .used {
    background: #26a0da;
  }

  .bytes,
  .size {
    text-align: right;
  }

  .size {
    width: 63px;
  }

  .usage {
    display: flex;
    align-items: flex-end;
    justify-content: space-between;
    padding: 0 0 6px 130px;
  }

  .usage-chart {
    display: flex;
    flex-direction: column;
    align-items: center;
    gap: 15px;
    margin-bottom: -2px;
  }

  .usage-chart svg {
    width: 56px;
    height: 56px;
  }

  .push {
    width: 73px;
    height: 21px;
    border: 1px solid #adadad;
    background: #e1e1e1;
  }

  .usage .push {
    width: 79px;
  }

  .push.default {
    border: 2px solid #0078d7;
  }

  .push:disabled {
    border-color: #bfbfbf;
    background: #ccc;
    color: #838383;
  }

  .options {
    display: flex;
    flex-direction: column;
    gap: 10px;
    padding: 32px 0 22px;
  }

  .options label {
    display: flex;
    align-items: flex-start;
    gap: 3px;
  }

  .options input {
    display: grid;
    width: 13px;
    height: 13px;
    flex: none;
    place-items: center;
    border: 1px solid #333;
    appearance: none;
  }

  .options input:checked::after {
    width: 7px;
    height: 3px;
    margin-top: -3px;
    border: solid #333;
    border-width: 0 0 1px 1px;
    transform: rotate(-45deg);
    content: "";
  }

  .dialog-actions {
    display: flex;
    justify-content: flex-end;
    gap: 8px;
    padding-top: 9px;
  }
</style>
